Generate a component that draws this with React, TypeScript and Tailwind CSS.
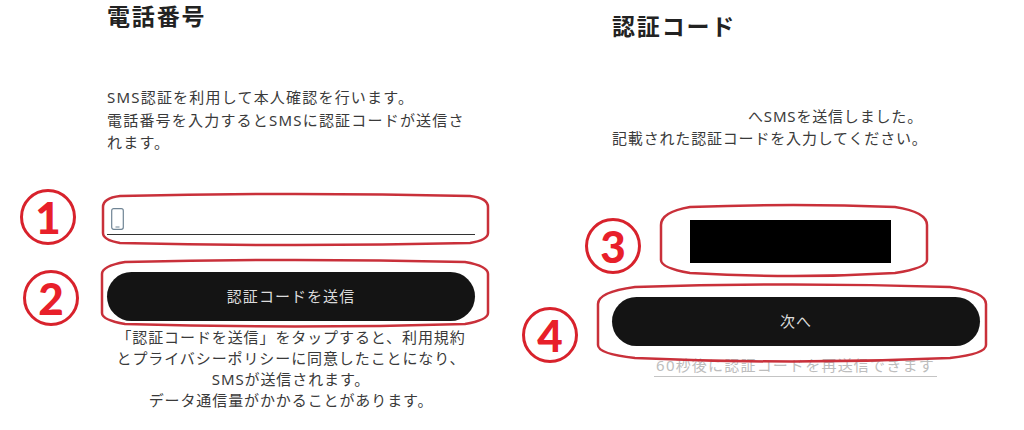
const font = { fontFamily: '"Noto Sans", "Noto Sans CJK JP", sans-serif' };

function CircleNumber({ n, className }: { n: string; className: string }) {
  return (
    <div
      className={`absolute flex h-[56px] w-[56px] items-center justify-center rounded-full border-[3px] border-[#d8222c] text-[44px] leading-none font-black text-[#e8202a] ${className}`}
      style={{ fontFamily: 'Lato, sans-serif' }}
    >
      {n}
    </div>
  );
}

function PillButton({ label }: { label: string }) {
  return (
    <button
      type="button"
      className="flex h-[49px] w-full items-center justify-center rounded-full bg-[#141414] text-[15px] tracking-[0.07em] text-[#dcdcdc]"
    >
      {label}
    </button>
  );
}

export default function App() {
  return (
    <div className="relative flex h-[430px] w-[1024px] overflow-hidden bg-white text-[#3a3a3a]" style={font}>
      {/* phone number step */}
      <div className="ml-[107px] flex w-[368px] flex-col">
        <h1 className="text-[23px] leading-[32px] font-bold tracking-[0.08em] text-[#222]">電話番号</h1>
        <p className="mt-[54px] text-[15px] leading-[22.5px] tracking-[0.08em]">
          SMS認証を利用して本人確認を行います。
          <br />
          電話番号を入力するとSMSに認証コードが送信さ
          <br />
          れます。
        </p>
        <div className="mt-[54px] flex h-[27px] items-start border-b border-[#333] pl-[4px]">
          <svg width="13" height="22" viewBox="0 0 13 22" fill="none" className="text-[#6f8494]">
            <rect x="0.7" y="0.7" width="11.6" height="20.6" rx="2" stroke="currentColor" strokeWidth="1.2" />
            <path d="M4.5 19h4" stroke="currentColor" strokeWidth="1" />
          </svg>
        </div>
        <div className="mt-[37px]">
          <PillButton label="認証コードを送信" />
        </div>
        <p className="mt-[6px] text-center text-[15px] leading-[21.3px] tracking-[0.06em] whitespace-nowrap">
          「認証コードを送信」をタップすると、利用規約
          <br />
          とプライバシーポリシーに同意したことになり、
          <br />
          SMSが送信されます。
          <br />
          データ通信量がかかることがあります。
        </p>
      </div>

      {/* verification code step */}
      <div className="ml-[137px] flex w-[368px] flex-col">
        <h1 className="mt-[10px] text-[23px] leading-[32px] font-bold tracking-[0.08em] text-[#222]">認証コード</h1>
        <p className="mt-[63px] text-[15px] leading-[22px] tracking-[0.055em]">
          <span className="pl-[136px]">へSMSを送信しました。</span>
          <br />
          記載された認証コードを入力してください。
        </p>
        <div className="mt-[71px] ml-[78px] h-[43px] w-[201px] bg-black" />
        <div className="mt-[34px]">
          <PillButton label="次へ" />
        </div>
        <div className="mt-[9px] ml-[42px] w-[283px] border-b border-[#c4c4c4] text-center text-[15px] leading-[21px] tracking-[0.08em] whitespace-nowrap text-[#bdbdbd]">
          60秒後に認証コードを再送信できます
        </div>
      </div>

      {/* red annotations over the screenshots */}
      <svg width="1024" height="430" viewBox="0 0 1024 430" fill="none" stroke="#c9303a" strokeWidth="2.5" className="absolute top-0 left-0">
        <path d="M120 196Q295 192 470 196Q488 198 488 207V233Q488 240 470 243Q295 247 120 243Q103 240 103 233V207Q103 198 120 196Z" />
        <path d="M125 262Q295 258 465 262Q488 266 488 274V313Q488 320 465 324Q295 329 125 324Q102 320 102 313V274Q102 266 125 262Z" />
        <path d="M690 207Q794 203 895 207Q927 212 927 225V260Q927 268 895 273Q794 279 690 273Q661 268 661 260V225Q661 212 690 207Z" />
        <path d="M635 287Q792 282 950 287Q986 292 986 304V345Q986 354 950 358Q792 365 635 358Q598 354 598 345V304Q598 292 635 287Z" />
      </svg>
      <CircleNumber n="1" className="top-[189px] left-[20px]" />
      <CircleNumber n="2" className="top-[270px] left-[23px]" />
      <CircleNumber n="3" className="top-[218px] left-[585px]" />
      <CircleNumber n="4" className="top-[307px] left-[522px]" />
    </div>
  );
}
